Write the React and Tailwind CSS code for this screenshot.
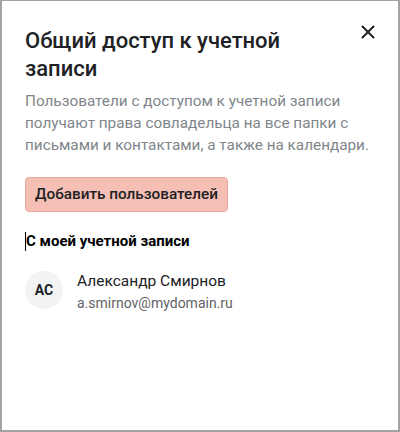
import { X } from "lucide-react";

const App = () => {
  return (
    <div
      className="w-[400px] h-[432px] bg-white border-x-2 border-b-2 border-t border-[#a3a3a3] px-[23px] pt-[22px] text-[#202124]"
      style={{ fontFamily: "Roboto, 'Noto Sans', sans-serif" }}
    >
      <div className="flex items-start justify-between">
        <h2 className="text-[22px] leading-[28px] font-medium mt-[4px] w-[300px]">
          Общий доступ к учетной записи
        </h2>
        <button className="-mt-[4px] -mr-[6px] p-[2px] text-[#202124]">
          <X className="w-[22px] h-[22px]" strokeWidth={2.2} />
        </button>
      </div>

      <p className="mt-[7px] text-[15.3px] leading-[22px] text-[#80868b]">
        Пользователи с доступом к учетной записи получают права совладельца на
        все папки с письмами и контактами, а также на календари.
      </p>

      <button className="mt-[21px] h-[35px] px-[9px] rounded-[4px] bg-[#f5bfb5] border border-[#eba99c] text-[15.3px] font-medium text-[#202124]">
        Добавить пользователей
      </button>

      <div className="mt-[19px] flex items-center text-[15px] leading-[20px] font-bold text-black">
        <span className="w-px h-[19px] bg-black" />
        <span>С моей учетной записи</span>
      </div>

      <div className="mt-[20px] flex items-start gap-[14px]">
        <div className="w-[38px] h-[38px] rounded-full bg-[#f1f3f4] flex items-center justify-center text-[14px] font-bold text-[#202124]">
          AC
        </div>
        <div className="flex flex-col">
          <span className="text-[15.5px] leading-[20px]">
            Александр Смирнов
          </span>
          <span className="text-[14px] leading-[18px] mt-[3px] text-[#5f6368]">
            a.smirnov@mydomain.ru
          </span>
        </div>
      </div>
    </div>
  );
};

export default App;
